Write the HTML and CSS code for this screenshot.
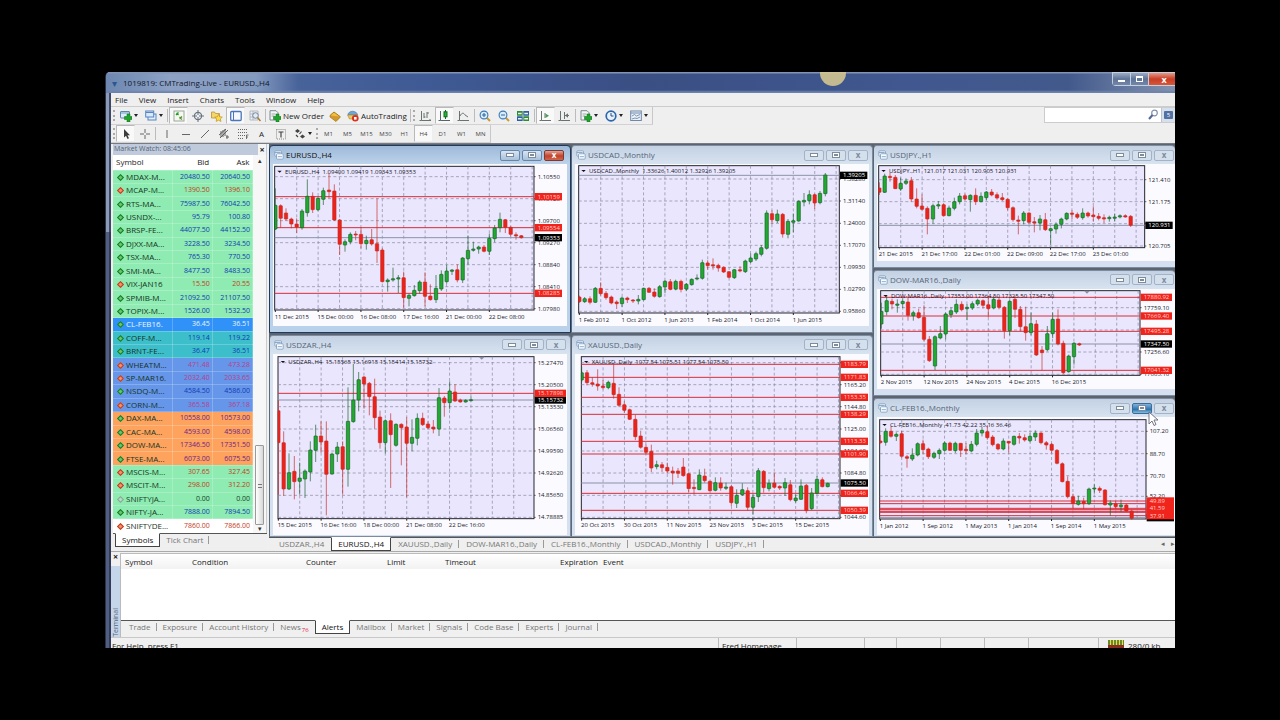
FILE: index.html
```html
<!DOCTYPE html>
<html lang="en">
<head>
<meta charset="utf-8">
<title>1019819: CMTrading-Live - EURUSD.,H4</title>
<link rel="stylesheet" href="styles.css">
</head>
<body>
<svg class="defs" aria-hidden="true">
  <symbol id="plus" viewBox="0 0 12 12"><path d="M7 4h3v2.500h2v3h-2V12H7V9.500H4.500v-3H7z" fill="#1fa52c" stroke="#0d6b1a" stroke-width=".5"/></symbol>
  <symbol id="i-new" viewBox="0 0 12 12"><rect x=".5" y="1.500" width="9" height="6.500" rx=".5" fill="#dcebf5" stroke="#5c87a8"/><path d="M1 3h8" stroke="#6ba0c8"/><use href="#plus"/></symbol>
  <symbol id="i-prof" viewBox="0 0 12 12"><rect x="3" y="4" width="8" height="6" fill="#e4eefa" stroke="#5684c0"/><rect x=".7" y="1" width="8" height="6" fill="#dae9fa" stroke="#5684c0"/><path d="M1 2.500h7.500" stroke="#5684c0"/></symbol>
  <symbol id="i-watch" viewBox="0 0 12 12"><rect x="1" y="1" width="10" height="10" fill="#f4f8ee" stroke="#9aa898"/><path d="M3.500 3l2 2M3 5l2.500-2.500" stroke="#1c9a2b" stroke-width="1.300"/><path d="M6.500 7l2.500 2.500M6.500 9l2.500-2.500" stroke="#5a8d35" stroke-width="1.300"/></symbol>
  <symbol id="i-target" viewBox="0 0 12 12"><circle cx="6" cy="6" r="3.600" fill="none" stroke="#687480" stroke-width="1.200"/><path d="M6 0v5M6 7v5M0 6h5M7 6h5" stroke="#687480"/></symbol>
  <symbol id="i-nav" viewBox="0 0 12 12"><path d="M.5 2h3l1 1.500h4V8h-8z" fill="#f3d66c" stroke="#bd902b" stroke-width=".8"/><path d="M7.500 4.500l1.200 2.300 2.600.3-1.900 1.700.5 2.600-2.400-1.200-2.300 1.200.4-2.600-1.800-1.700 2.500-.3z" fill="#ffdc45" stroke="#bd902b" stroke-width=".7"/></symbol>
  <symbol id="i-term" viewBox="0 0 12 12"><rect x=".7" y="1.500" width="10.500" height="9" rx="1" fill="#f5f9ff" stroke="#4975bb" stroke-width="1.300"/><path d="M3.500 1.500v9" stroke="#4975bb"/></symbol>
  <symbol id="i-test" viewBox="0 0 12 12"><path d="M1 1h8v9H1zM1 4h8M4 1v9M1 7h8" fill="#eef1f5" stroke="#a4aebb" stroke-width=".8"/><circle cx="6.500" cy="5.500" r="2.800" fill="#dfeaf5" stroke="#758698"/><path d="M8.500 7.500l3 3.500" stroke="#a67c2e" stroke-width="1.500"/></symbol>
  <symbol id="i-order" viewBox="0 0 12 12"><path d="M1 .7h6l2 2V10H1z" fill="#f4f5f5" stroke="#7d8a94"/><path d="M2.500 4h4M2.500 6h3" stroke="#9aa"/><use href="#plus"/></symbol>
  <symbol id="i-gold" viewBox="0 0 12 12"><path d="M1 5.500L5 2l6 4.500L7 10.500z" fill="#f0c040" stroke="#a8771a"/><path d="M1 5.500v1.500l6 4.500 4-4v-1" fill="#d29a2b" stroke="#a8771a" stroke-width=".7"/></symbol>
  <symbol id="i-auto" viewBox="0 0 12 12"><path d="M1 5c0-5 9-5 9.500 0z" fill="#6ca7d9" stroke="#3c74a8" stroke-width=".6"/><path d="M.5 5h10.500L9 9H2.500z" fill="#ecc457" stroke="#a9862e" stroke-width=".6"/><circle cx="8.300" cy="8.300" r="3.300" fill="#d8321d"/><rect x="7" y="7" width="2.600" height="2.600" fill="#fff"/></symbol>
  <symbol id="i-bars" viewBox="0 0 12 12"><path d="M2.500 1v9.500H12M.5 10.500h2M5 8V3M5 7h1.500M8 8V2M8 3h2M10.500 9l1.500 1.500" stroke="#68736f" fill="none"/></symbol>
  <symbol id="i-candle" viewBox="0 0 12 12"><path d="M2.500 1v9.500H12M.5 10.500h2" stroke="#566" fill="none"/><path d="M7.500 0v9" stroke="#0d6b1a"/><rect x="6" y="1.800" width="3" height="5" fill="#28b43a" stroke="#0d6b1a"/></symbol>
  <symbol id="i-line" viewBox="0 0 12 12"><path d="M2.500 1v9.500H12M.5 10.500h2M3 6c2-4 4-3 5-1l3 2" stroke="#68736f" fill="none"/></symbol>
  <symbol id="i-zin" viewBox="0 0 12 12"><path d="M7.500 7.500L11 11" stroke="#c99a34" stroke-width="2"/><circle cx="5" cy="5" r="3.900" fill="#d9ecfb" stroke="#3b78b5" stroke-width="1.100"/><path d="M3 5h4M5 3v4" stroke="#2b68a5" stroke-width="1.100"/></symbol>
  <symbol id="i-zout" viewBox="0 0 12 12"><path d="M7.500 7.500L11 11" stroke="#c99a34" stroke-width="2"/><circle cx="5" cy="5" r="3.900" fill="#d9ecfb" stroke="#3b78b5" stroke-width="1.100"/><path d="M3 5h4" stroke="#2b68a5" stroke-width="1.100"/></symbol>
  <symbol id="i-tile" viewBox="0 0 12 12"><path d="M0 1h5.700v4.700H0z" fill="#2e8b3a"/><path d="M6.300 1H12v4.700H6.300z" fill="#2b5fa9"/><path d="M0 6.300h5.700V11H0z" fill="#2b5fa9"/><path d="M6.300 6.300H12V11H6.300z" fill="#2e8b3a"/><path d="M1 3.500h3.700M7.300 3.500H11M1 8.800h3.700M7.300 8.800H11" stroke="#e9f5e0" stroke-width="1.500"/></symbol>
  <symbol id="i-scroll" viewBox="0 0 12 12"><path d="M2.500 1v9.500H12M.5 10.500h2M6 3v5" stroke="#68736f" fill="none"/><path d="M6.500 3.500L10 5.700 6.500 8z" fill="#4c9a5a"/></symbol>
  <symbol id="i-shift" viewBox="0 0 12 12"><path d="M2.500 1v9.500H12M.5 10.500h2M6.500 2v7M7 5.500h4" stroke="#68736f" fill="none"/><path d="M7 5.500l3-2.200v4.400z" fill="#68736f"/></symbol>
  <symbol id="i-clock" viewBox="0 0 12 12"><circle cx="6" cy="6" r="4.800" fill="#e7f2fd" stroke="#2c66ad" stroke-width="1.700"/><path d="M6 3v3h2.500" stroke="#2c4e7e" fill="none"/></symbol>
  <symbol id="i-templ" viewBox="0 0 12 12"><rect x=".7" y="1" width="10.600" height="9.500" fill="#eaf1fa" stroke="#6f88a8"/><path d="M1 3h10" stroke="#6f88a8"/><path d="M2 6l2.500-1.500 2 1.500L10 4.500M2 9l3-1 2 .5 3-1.500" stroke="#5c7c9c" fill="none" stroke-width=".8"/></symbol>
  <symbol id="i-cursor" viewBox="0 0 12 12"><path d="M4 1v8.500l2-1.800 1.500 3.300 1.500-.7L7.500 7.200H10z" fill="#3c3c3c"/></symbol>
  <symbol id="i-cross" viewBox="0 0 12 12"><path d="M6 1v4M6 7v4M1 6h4M7 6h4" stroke="#666"/></symbol>
  <symbol id="i-vline" viewBox="0 0 12 12"><path d="M6 2v8" stroke="#666"/></symbol>
  <symbol id="i-hline" viewBox="0 0 12 12"><path d="M2 6.500h8" stroke="#666"/></symbol>
  <symbol id="i-tline" viewBox="0 0 12 12"><path d="M2 10l8-8" stroke="#666"/></symbol>
  <symbol id="i-chan" viewBox="0 0 12 12"><path d="M1 7l7-6M2 10l8-8M3 3v6M5 2v7M7 1v7M9 7v4M8 9h3" stroke="#555" stroke-width=".9"/></symbol>
  <symbol id="i-fibo" viewBox="0 0 12 12"><path d="M1 1.500h10M1 4.500h10M1 7.500h7M1 10.500h6" stroke="#666" stroke-dasharray="1 1"/><path d="M9.500 11V7h2M9.500 9h1.500" stroke="#555" fill="none" stroke-width=".8"/></symbol>
  <symbol id="i-box" viewBox="0 0 12 12"><rect x="1.500" y="1.500" width="9" height="9.500" fill="none" stroke="#888" stroke-dasharray="1 1"/><path d="M3.500 4h5M6 4v5.500" stroke="#444" stroke-width="1.200"/></symbol>
  <symbol id="i-arrows" viewBox="0 0 12 12"><path d="M1 3l2.500-2L6 3 3.500 5zM6 8.500l2.500-2 2.500 2-2.500 2z" fill="#444"/><path d="M2 7l2 2M7.500 3.500l-2 2.500" stroke="#444" stroke-width="1.200"/></symbol>
  <symbol id="i-doc" viewBox="0 0 12 12"><rect x="1" y="1" width="8" height="6.500" rx="1" fill="#edf4fb" stroke="#7c9cbe"/><rect x="3" y="4.500" width="8" height="6.500" rx="1" fill="#f8fbff" stroke="#7c9cbe"/><path d="M1 3h7M4.500 8h5" stroke="#7c9cbe"/></symbol>
</svg>

<main class="app">
  <header class="titlebar">
    <span class="logo">▾</span>
    <h1>1019819: CMTrading-Live - EURUSD.,H4</h1>
    <i class="sun"></i>
    <div class="sys">
      <button aria-label="Minimize"><i class="min"></i></button><button aria-label="Maximize"><i class="max"></i></button><button class="close" aria-label="Close">x</button>
    </div>
  </header>

  <nav class="menu">
    <button>File</button><button>View</button><button>Insert</button><button>Charts</button><button>Tools</button><button>Window</button><button>Help</button>
  </nav>

  <div class="bars">
    <div class="toolrows">
      <div class="tools" id="tools1"></div>
      <div class="tools" id="tools2"></div>
    </div>
    <form class="search">
      <input type="search" aria-label="Search">
      <svg viewBox="0 0 12 12"><circle cx="7.500" cy="4" r="2.800" fill="none" stroke="#8292ac" stroke-width="1.200"/><path d="M5.500 6L2 10" stroke="#50689a" stroke-width="2"/></svg>
      <button type="button" aria-label="Messages"><span>5</span></button>
    </form>
  </div>

  <div class="work">
    <aside class="watch">
      <div class="cap"><h2>Market Watch: 08:45:06</h2><button aria-label="Close Market Watch">×</button></div>
      <div class="list">
        <table>
          <thead><tr><th>Symbol</th><th>Bid</th><th>Ask</th></tr></thead>
          <tbody id="quotes"></tbody>
        </table>
        <div class="scroll"><span>▴</span><i></i><span>▾</span></div>
      </div>
      <div class="tabs"><button class="on">Symbols</button><button>Tick Chart</button></div>
    </aside>

    <section class="desk">
      <div class="mdi">
        <div class="col two" id="col1"></div>
        <div class="col two" id="col2"></div>
        <div class="col three" id="col3"></div>
        <svg class="pointer" viewBox="0 0 12 16"><path d="M1 1v12l3-3 2 4.500 2-1L6 9h4z" fill="#fff" stroke="#667" stroke-width=".9"/></svg>
      </div>
      <div class="tabs charts">
        <button>USDZAR.,H4</button><button class="on">EURUSD.,H4</button><button>XAUUSD.,Daily</button><button>DOW-MAR16.,Daily</button><button>CL-FEB16.,Monthly</button><button>USDCAD.,Monthly</button><button>USDJPY.,H1</button>
        <span class="arrows"><span>◂</span><span>▸</span></span>
      </div>
    </section>
  </div>

  <section class="terminal">
    <div class="side"><button aria-label="Close Terminal">×</button><h2>Terminal</h2></div>
    <div class="pane">
      <table>
        <thead><tr><th>Symbol</th><th>Condition</th><th>Counter</th><th>Limit</th><th>Timeout</th><th>Expiration</th><th>Event</th></tr></thead>
      </table>
      <div class="tabs">
        <button>Trade</button><button>Exposure</button><button>Account History</button><button>News<sub>76</sub></button><button class="on">Alerts</button><button>Mailbox</button><button>Market</button><button>Signals</button><button>Code Base</button><button>Experts</button><button>Journal</button>
      </div>
    </div>
  </section>

  <footer class="status">
    <span class="help">For Help, press F1</span><span class="profile">Fred Homepage</span><span></span><span></span><span></span><span></span><span></span><span></span>
    <span class="net"><i></i>280/0 kb</span>
  </footer>
</main>
<script src="app.js"></script>
</body>
</html>
```
FILE: styles.css
```css
* { box-sizing: border-box; }
body {
  margin: 0;
  min-height: 100vh;
  padding: 72px 105px;
  display: flex;
  background: #000;
  color: #222;
  font: 8px/10px "Open Sans", "Noto Sans", sans-serif;
}
h1, h2 { margin: 0; font-size: 8px; font-weight: 400; }
button { font: inherit; color: inherit; background: none; border: 0; padding: 0; margin: 0; white-space: nowrap; }
.defs { position: absolute; width: 0; height: 0; }

.app {
  flex: 1;
  min-width: 0;
  height: calc(100vh - 144px);
  min-height: 576px;
  display: flex;
  flex-direction: column;
  overflow: hidden;
  padding-left: 5px;
  border-left: 1px solid #2b3346;
  border-radius: 5px 0 0 0;
  background: linear-gradient(90deg, #8c99b8 0 3px, #3e4966 3px 5px, #f0f0f0 5px) no-repeat 0 0 / 100% 160px, linear-gradient(90deg, #515d83 0 3px, #323b57 3px 5px, #f0f0f0 5px);
}

/* Title bar */
.titlebar {
  position: relative;
  flex: 0 0 21px;
  margin-left: -5px;
  display: flex;
  align-items: center;
  gap: 6px;
  padding-left: 6px;
  background: linear-gradient(180deg, #8494b4 0 1px, transparent 2px 18px, #6d83ad 20px), linear-gradient(90deg, #6d87b0, #8ca1c4 6%, #839abf 14%, #48639a 18%, #3f5a94 30%, #3a4f84 50%, #40588f 75%, #42598c 90%, #8292ae);
}
.titlebar h1 { color: #11182a; line-height: 20px; }
.logo { color: #2b5790; font-size: 10px; }
.sun { position: absolute; left: 68%; top: -12px; width: 26px; height: 26px; margin-left: -13px; border-radius: 50%; background: #dccb90; opacity: .85; }
.sys { margin-left: auto; align-self: flex-start; display: flex; height: 14px; border: 1px solid #c4cfe0; border-right: 0; border-radius: 0 0 0 4px; }
.sys button { width: 18px; display: grid; place-items: center; color: #fff; border-right: 1px solid #c4cfe0; background: linear-gradient(#9aabc6, #5f7496 50%, #7287aa); }
.sys .close { width: 26px; padding-left: 4px; border-right: 0; font: 700 9px/9px "Open Sans", sans-serif; background: linear-gradient(#e29a88, #c93e25 50%, #d8563a); }
.min { width: 7px; height: 2px; margin-top: 3px; background: #fff; }
.max { width: 7px; height: 6px; border: 1px solid #fff; border-top-width: 2px; }

.menu { flex: 0 0 14px; display: flex; gap: 11px; padding-left: 4px; background: #efefef; border-bottom: 1px solid #ccc; }
.menu button { line-height: 12px; }

/* Toolbars */
.bars { flex: 0 0 37px; display: flex; justify-content: space-between; background: #efefef; border-bottom: 1px solid #777c84; }
.toolrows { display: flex; flex-direction: column; align-items: flex-start; }
.tools { display: flex; height: 18px; padding-left: 1px; border-right: 1px solid #c8c8c8; border-bottom: 1px solid #d2d2d2; }
.tools button { width: 19px; display: flex; align-items: center; justify-content: center; gap: 2px; color: #222; }
.tools svg { width: 12px; height: 12px; flex: none; }
.tools .drop { width: 25px; }
.tools .drop::after { content: ""; border: 2px solid transparent; border-top: 3px solid #222; border-bottom: 0; }
.tools .wide { width: auto; padding: 0 2px; }
.tools .on { background: #f9f9f9; border: 1px solid #b9b9b9; border-right-color: #eee; border-bottom-color: #eee; }
.tools i { width: 1px; margin: 2px 1px; background: #bbb; }
.tools i.grip { width: 2px; margin: 3px 1px; border-left: 2px dotted #aaa; background: none; }
.tools .tf { font-size: 6px; color: #444; }
.search { display: flex; align-self: flex-start; height: 16px; width: 131px; background: #fff; border: 1px solid #ccc; border-right: 0; }
.search input { flex: 1; min-width: 0; border: 0; background: none; font: inherit; }
.search svg { width: 12px; margin-right: 2px; }
.search button { width: 14px; display: grid; place-items: center; border-left: 1px solid #b9c3d3; background: #d6dfec; }
.search span { width: 9px; height: 8px; border-radius: 1px; background: #5370a3; color: #fff; font-size: 6px; line-height: 8px; }

.work { flex: 1; min-height: 0; display: flex; background: #efefef; }

/* Market watch */
.watch { width: 158px; padding-left: 2px; display: flex; flex-direction: column; border-right: 2px solid #f0f0f0; padding-bottom: 4px; }
.cap { flex: 0 0 11px; display: flex; justify-content: space-between; padding: 0 1px; background: #bfcbdc; }
.cap h2 { color: #566274; font-size: 7px; line-height: 10px; }
.cap button { width: 8px; background: #f4f4f4; font-weight: 700; font-size: 9px; line-height: 9px; }
.list { flex: 1; min-height: 0; display: flex; background: #f7f7f7; border: 1px solid #ccc; border-width: 0 1px 0 0; }
.list table { width: 140px; height: 100%; border-collapse: collapse; table-layout: fixed; }
.list th { height: 15px; padding: 0 3px; font-weight: 400; text-align: right; background: #fff; }
.list th:first-child { width: 59px; text-align: left; }
.list td { padding: 0 2px 0 0; font-size: 7px; text-align: right; line-height: 10px; border: 1px solid rgba(255,255,255,.22); border-left: 0; white-space: nowrap; color: #123ab4; }
.list td:first-child { text-align: left; padding-left: 4px; font-size: 8px; color: #173324; }
.list td i { display: inline-block; width: 5px; height: 5px; margin: 0 3px 0 1px; transform: rotate(45deg); border: 1px solid #0f7e26; background: #6cc46c; }
.list .down td:not(:first-child) { color: #c33b22; }
.list .down i { border-color: #c4391d; background: #f0936c; }
.list .flat td { color: #17402a; }
.list .flat i { border-color: #85a892; background: #b5dcc4; }
.green { background: #8eebb1; }
.sel { background: #3092f8; }
.list .sel td:nth-child(n) { color: #eaf4ff; }
.teal { background: #3cbfcb; }
.blue { background: #6596ea; }
.list .blue.down td:not(:first-child) { color: #b8428a; }
.orange { background: #fda35d; }
.list .orange td + td { color: #6f1f88; }
.white { background: #fff; }
.scroll { flex: 1; display: flex; flex-direction: column; align-items: center; padding-top: 2px; color: #333; }
.scroll i { width: 9px; height: 80px; margin-top: auto; border: 1px solid #9a9a9a; border-radius: 1px; background: linear-gradient(#777, #777) center 38px / 4px 1px no-repeat, linear-gradient(#777, #777) center 41px / 4px 1px no-repeat, linear-gradient(90deg, #fff, #d8d8d8); }
.scroll span { font-size: 7px; line-height: 8px; }

/* Tab strips */
.tabs { flex: none; display: flex; align-items: flex-start; height: 15px; padding-left: 2px; border-top: 1px solid #555; color: #777; }
.tabs button { height: 12px; padding: 0 6px; line-height: 12px; position: relative; }
.tabs button:not(.on)::after { content: ""; position: absolute; right: 0; top: 2px; height: 8px; border-right: 1px solid #999; }
.tabs button:has(+ .on)::after { display: none; }
.tabs .on { margin-top: -1px; height: 14px; color: #111; background: #fff; border: 1px solid #444; border-top-color: #fff; }
.watch .tabs { height: 14px; }

/* Chart windows */
.desk { flex: 1; min-width: 0; display: flex; flex-direction: column; }
.mdi { position: relative; flex: 1; min-height: 0; display: grid; grid-template-columns: repeat(3, minmax(0, 1fr)); padding-top: 1px; background: #5c6470; }
.col { display: grid; min-height: 0; gap: 2px; }
.two { grid-template-rows: 187fr 201fr; }
.three { grid-template-rows: 122fr 126fr 138fr; }
.win { min-height: 0; display: flex; flex-direction: column; padding: 0 3px 6px; border: 1px solid #7d8ba0; border-left-color: #5b6878; border-radius: 4px 4px 0 0; background: linear-gradient(#c3d1e3, #d8e3f0 18px, #d5e1f0); }
.win:last-child { padding-bottom: 1px; }
.three .win { padding-right: 0; border-right: 0; }
.win.active { border-color: #1f3a5e; background: linear-gradient(#9db9d8, #bdd3ea 18px, #b9d1ea); }
.wbar { flex: 0 0 18px; display: flex; align-items: center; gap: 2px; padding: 0 1px; }
.active .wbar { padding-right: 3px; }
.wbar > svg { width: 10px; height: 10px; }
.wbar h2 { flex: 1; color: #55657a; }
.active .wbar h2 { color: #111; }
.wbar button { width: 20px; height: 11px; display: grid; place-items: center; border: 1px solid #a3b2c6; border-radius: 2px; background: #d5e0ed; color: #7d8b9e; font: 700 8px/8px "Open Sans", sans-serif; }
.wbar .b1 { width: 8px; height: 4px; border: 1px solid #7d8b9e; background: #fff; }
.wbar .b2 { width: 8px; height: 6px; border: 1px solid #7d8b9e; background: #7d8b9e; box-shadow: inset 0 0 0 1px #fff; }
.wbar .hot { background: linear-gradient(#7fb5dc, #2d73ab 60%, #7fc0e2); border-color: #3d6c98; }
.active .wbar button { background: linear-gradient(#d8e5f3, #a8c0da); border-color: #6585a9; }
.active .wbar .x { background: linear-gradient(#e0a595, #c1422a 55%, #d0674c); color: #fff; border-color: #7c3a35; }
.chart { flex: 1; min-height: 0; width: 100%; display: block; background: #fbfbff; font: 18px "Open Sans", sans-serif; }
.chart text { fill: #16161f; }
.chart .tag { fill: #ffd2cc; }
.chart .now { fill: #fff; }
.plot { fill: #e9e6fd; stroke: #26262e; stroke-width: 3; }
.grid { stroke: #85859a; stroke-width: 2; stroke-dasharray: 9 7; }
.level { stroke: #dc2d38; stroke-width: 3; }
.price { stroke: #8b93a8; stroke-width: 3; }
.up { fill: #20aa30; stroke: #175f26; stroke-width: 2; }
.dn { fill: #ec2318; stroke: #c92a25; stroke-width: 2; }
.pointer { position: absolute; left: 97%; top: 68%; width: 12px; height: 16px; }

.charts { height: 14px; padding-left: 3px; }
.charts button { padding: 0 7px; }
.charts .on { padding: 0 6px; }
.arrows { margin-left: auto; display: flex; gap: 6px; line-height: 12px; font-size: 7px; color: #666; }

/* Terminal */
.terminal { flex: 0 0 86px; display: flex; border-top: 1px solid #aaa; }
.side { width: 9px; display: flex; flex-direction: column; align-items: center; justify-content: space-between; background: linear-gradient(#f0f0f0 0 14px, #c6d6ea 14px); }
.side button { font-weight: 700; font-size: 9px; }
.side h2 { writing-mode: vertical-rl; transform: rotate(180deg); color: #54647c; font-size: 7px; }
.pane { flex: 1; min-width: 0; margin-top: 1px; display: flex; flex-direction: column; justify-content: space-between; background: #fff; border: 1px solid #bbb; border-right: 0; border-bottom: 0; }
.pane table { border-collapse: collapse; width: 100%; table-layout: fixed; }
.pane th { height: 15px; padding: 0 0 0 4px; font-weight: 400; text-align: left; background: linear-gradient(#fff, #f2f2f2); }
.pane th:nth-child(1) { width: 67px; }
.pane th:nth-child(2) { width: 114px; }
.pane th:nth-child(3) { width: 81px; }
.pane th:nth-child(4) { width: 58px; }
.pane th:nth-child(5) { width: 115px; }
.pane th:nth-child(6) { width: 43px; }
.pane .tabs { height: 17px; background: #f0f0f0; }
.tabs sub { font-size: 6px; line-height: 0; color: #e0213a; vertical-align: -2px; margin-left: 1px; }

.status { flex: 0 0 11px; display: flex; height: 11px; overflow: hidden; border-top: 1px solid #c8c8c8; line-height: 15px; }
.status span { width: 44px; border-left: 1px solid #bbb; padding-left: 3px; white-space: nowrap; }
.status .help { flex: 1; border-left: 0; padding-left: 1px; }
.status .profile { width: 78px; }
.status span:nth-child(3) { width: 68px; }
.status span:nth-child(4) { width: 32px; }
.status span:nth-child(8) { width: 70px; }
.status .net { width: 77px; display: flex; gap: 4px; padding-left: 9px; }
.net i { width: 16px; height: 8px; margin-top: 2px; background: repeating-linear-gradient(90deg, #6a8a22 0 2px, #e8dc60 2px 3px); border-bottom: 3px solid #8c2f22; }
```
FILE: app.js
```js
const icon = (id) => `<svg viewBox="0 0 12 12"><use href="#i-${id}"/></svg>`;
const SEP = "<i></i>", GRIP = '<i class="grip"></i>';
const btn = (id, label, cls = "") => `<button class="${cls}" aria-label="${label}">${icon(id)}</button>`;

document.getElementById("tools1").innerHTML = [
  GRIP, btn("new", "New chart", "drop"), btn("prof", "Profiles", "drop"), SEP,
  btn("watch", "Market Watch", "on"), btn("target", "Data Window"), btn("nav", "Navigator"),
  btn("term", "Terminal", "on"), btn("test", "Strategy Tester"), SEP,
  `<button class="wide">${icon("order")}New Order</button>`, btn("gold", "MetaEditor"),
  `<button class="wide">${icon("auto")}AutoTrading</button>`, SEP, GRIP,
  btn("bars", "Bar Chart"), btn("candle", "Candlesticks", "on"), btn("line", "Line Chart"), SEP,
  btn("zin", "Zoom In"), btn("zout", "Zoom Out"), btn("tile", "Tile Windows"), SEP,
  btn("scroll", "Auto Scroll", "on"), btn("shift", "Chart Shift"), SEP,
  btn("order", "Indicators", "drop"), btn("clock", "Periods", "drop"), btn("templ", "Templates", "drop"),
].join("");

document.getElementById("tools2").innerHTML = [
  GRIP, btn("cursor", "Cursor", "on"), btn("cross", "Crosshair"), SEP,
  btn("vline", "Vertical Line"), btn("hline", "Horizontal Line"), btn("tline", "Trendline"),
  btn("chan", "Channel"), btn("fibo", "Fibonacci"), "<button>A</button>", btn("box", "Text Label"),
  btn("arrows", "Arrows", "drop"), GRIP,
  ...["M1", "M5", "M15", "M30", "H1", "H4", "D1", "W1", "MN"].map((t) => `<button class="tf${t === "H4" ? " on" : ""}">${t}</button>`),
].join("");

const quotes = `MDAX-M...|20480.50|20640.50|green
MCAP-M...|1390.50|1396.10|green down
RTS-MA...|75987.50|76042.50|green
USNDX-...|95.79|100.80|green
BRSP-FE...|44077.50|44152.50|green
DJXX-MA...|3228.50|3234.50|green
TSX-MA...|765.30|770.50|green
SMI-MA...|8477.50|8483.50|green
VIX-JAN16|15.50|20.55|green down
SPMIB-M...|21092.50|21107.50|green
TOPIX-M...|1526.00|1532.50|green
CL-FEB16.|36.45|36.51|sel
COFF-M...|119.14|119.22|teal
BRNT-FE...|36.47|36.51|teal
WHEATM...|471.48|473.28|blue down
SP-MAR16.|2032.40|2033.65|blue down
NSDQ-M...|4584.50|4586.00|blue
CORN-M...|365.58|367.18|blue down
DAX-MA...|10558.00|10573.00|orange
CAC-MA...|4593.00|4598.00|orange
DOW-MA...|17346.50|17351.50|orange
FTSE-MA...|6073.00|6075.50|orange
MSCIS-M...|307.65|327.45|green down
MSCIT-M...|298.00|312.20|green down
SNIFTYJA...|0.00|0.00|green flat
NIFTY-JA...|7888.00|7894.50|green
SNIFTYDE...|7860.00|7866.00|white down`;
document.getElementById("quotes").innerHTML = quotes.split("\n").map((q) => {
  const [s, bid, ask, cls] = q.split("|");
  return `<tr class="${cls}"><td><i></i>${s}</td><td>${bid}</td><td>${ask}</td></tr>`;
}).join("");

// Each candle: colour, wick top, body top, body bottom, wick bottom.
const charts = [
  { col: 1, name: "EURUSD.,H4", active: true, info: "1.09400 1.09419 1.09343 1.09353", view: [15, 57, 882, 483], plot: [20, 64, 798, 495], x0: 22,
    rows: [[95, "1.10550"], [161, "1.10120"], [227, "1.09700"], [293, "1.09270"], [359, "1.08840"], [425, "1.08410"], [491, "1.07980"]],
    levels: [[155, "1.10159"], [248, "1.09554"], [445, "1.08285"]], now: [278, "1.09353"],
    dates: ["11 Dec 2015", "15 Dec 00:00", "16 Dec 08:00", "17 Dec 16:00", "21 Dec 00:00", "22 Dec 08:00"],
    data: "g130,181,252,255 r178,182,220,248 r190,204,222,228 r218,222,237,250 r220,237,246,264 g192,198,248,254 g103,154,203,215 r142,154,194,204 g155,160,194,198 g128,137,163,180 r85,135,140,160 r118,138,225,228 r222,225,298,330 g283,290,300,320 g262,268,290,298 r258,267,270,286 r246,268,296,310 g272,286,296,314 r252,284,297,302 r160,296,318,354 r310,315,410,412 g400,405,410,440 g368,401,405,410 g390,398,402,444 r380,398,458,488 g446,451,460,484 g420,436,452,455 g406,411,437,446 r382,411,454,484 r418,453,464,467 g390,430,464,474 g376,388,432,438 g360,378,410,416 g372,375,379,390 r358,374,405,412 g336,339,405,414 g272,316,341,358 g290,312,316,320 g302,306,312,326 r300,306,319,322 g266,280,319,330 g240,249,281,292 g203,223,248,262 r222,224,247,264 r244,247,268,274 r262,269,273,284 r270,272,278,281" },
  { col: 1, name: "USDZAR.,H4", info: "15.15565 15.16915 15.15414 15.15732", view: [15, 54, 882, 540], plot: [30, 62, 798, 548], x0: 31, mark: 641,
    rows: [[80, "15.27470"], [146, "15.20500"], [212, "15.13530"], [279, "15.06560"], [345, "14.99590"], [411, "14.92620"], [478, "14.85650"], [544, "14.78885"]],
    levels: [[172, "15.17898"]], now: [192, "15.15732"],
    dates: ["15 Dec 2015", "16 Dec 16:00", "18 Dec 00:00", "21 Dec 08:00", "22 Dec 16:00"],
    data: "r192,224,320,476 r286,320,459,480 g352,410,459,462 r360,406,437,490 g380,426,436,476 g400,405,429,486 g316,342,408,436 g266,300,343,378 r256,300,318,350 r256,315,415,538 g350,354,414,416 g318,333,354,378 r316,332,400,476 g154,256,400,452 g84,192,257,260 g108,131,192,226 r120,123,144,218 r138,142,182,238 r128,182,245,278 r224,243,320,338 g250,254,320,352 r232,254,296,456 g262,265,328,332 r262,265,275,388 r244,273,322,484 g250,304,322,346 g232,247,307,328 r230,247,266,270 r256,264,275,280 r252,273,279,292 g156,185,279,300 r180,186,200,242 g136,165,200,220 r144,168,195,198 r188,192,198,200 g190,193,198,200 g182,191,194,196" },
  { col: 2, name: "USDCAD.,Monthly", info: "1.33626 1.40012 1.32926 1.39205", view: [9, 57, 882, 483], plot: [20, 62, 802, 504], x0: 22,
    rows: [[102, "1.38280"], [168, "1.31140"], [235, "1.24000"], [301, "1.17070"], [367, "1.09930"], [433, "1.02790"], [499, "0.95860"]],
    levels: [], now: [91, "1.39205"],
    dates: ["1 Feb 2012", "1 Oct 2012", "1 Jun 2013", "1 Feb 2014", "1 Oct 2014", "1 Jun 2015"],
    data: "r452,456,470,474 g456,461,470,474 r454,461,472,478 g426,430,472,474 r412,430,446,452 r438,445,458,464 r452,456,474,478 r466,471,476,492 g455,459,476,486 r455,459,464,474 r462,465,468,474 g450,463,468,478 g428,430,464,466 r426,430,442,444 r430,441,454,458 g420,425,455,458 g405,409,426,444 r402,410,433,436 g404,409,432,436 r404,409,433,442 g414,418,432,438 g400,403,419,422 g388,399,402,406 g344,353,400,404 r346,354,362,374 r340,359,363,374 r356,361,369,380 r364,367,381,384 r378,380,397,400 g372,374,398,402 r364,374,378,382 g344,348,380,384 g326,339,350,354 g320,326,342,348 g300,308,328,334 g196,204,310,314 r196,206,224,238 g194,207,227,234 r204,208,267,278 g222,229,268,280 g206,227,232,262 g166,169,228,230 g144,166,171,184 g136,149,167,178 r146,149,174,192 g138,145,173,178 g84,90,146,154" },
  { col: 2, name: "XAUUSD.,Daily", info: "1077.54 1075.51 1077.54 1075.50", view: [9, 54, 882, 540], plot: [28, 62, 804, 548], x0: 29,
    rows: [[80, ""], [146, "1165.20"], [212, "1144.80"], [279, "1125.00"], [345, "1104.60"], [411, "1084.80"], [478, "1064.40"], [544, "1044.60"]],
    levels: [[85, "1183.79"], [124, "1171.83"], [184, "1153.35"], [235, "1138.29"], [316, "1113.33"], [354, "1101.90"], [472, "1066.46"], [523, "1050.39"]], now: [441, "1075.50"],
    dates: ["20 Oct 2015", "30 Oct 2015", "11 Nov 2015", "23 Nov 2015", "3 Dec 2015", "15 Dec 2015"],
    data: "g92,110,132,138 r102,110,140,148 r124,140,145,152 r100,144,150,164 r132,150,155,160 g134,139,155,160 r84,142,176,188 r154,175,208,212 r196,206,223,230 r218,221,250,252 r236,250,302,312 r284,300,334,338 r326,334,349,354 r326,346,396,408 g374,386,392,400 r378,386,395,408 r380,394,405,412 r392,405,411,446 r396,405,412,426 r366,393,419,422 r410,413,458,468 r430,454,458,476 g400,417,461,462 r398,420,434,440 r434,436,464,466 g424,440,463,466 r424,441,456,464 g440,453,457,462 r448,452,500,510 g460,478,502,516 g442,461,476,480 r454,464,514,524 g474,484,514,536 g396,404,482,498 r402,406,455,470 g430,442,458,466 r410,441,454,458 r448,451,456,462 g426,440,456,480 r432,446,491,496 g474,486,494,500 g430,450,490,492 r444,448,524,532 g456,471,518,522 g420,430,472,476 r424,431,452,454 g440,442,452,454" },
  { col: 3, name: "USDJPY.,H1", info: "121.017 121.031 120.905 120.931", view: [15, 57, 894, 288], plot: [20, 62, 818, 308], x0: 22,
    rows: [[104, "121.410"], [170, "121.175"], [236, ""], [303, "120.705"]],
    levels: [], now: [241, "120.931"],
    dates: ["21 Dec 2015", "21 Dec 17:00", "22 Dec 01:00", "22 Dec 09:00", "22 Dec 17:00", "23 Dec 01:00"],
    data: "r112,129,142,150 g86,93,142,144 r82,94,98,110 r90,97,131,132 g98,115,132,138 g100,108,115,120 r96,107,162,170 r130,162,184,190 r148,183,193,196 r184,190,222,268 g176,182,222,236 g168,179,183,192 r176,179,212,214 g182,189,212,214 g158,170,190,196 g144,153,170,178 r146,152,162,166 g148,151,164,200 r130,151,170,180 g142,154,170,172 g138,141,158,166 r132,141,150,154 r142,149,159,164 r144,158,164,168 r160,163,188,196 r184,188,224,230 r212,225,229,268 g198,204,227,238 r202,204,232,236 r216,230,234,262 g210,222,234,256 r204,224,254,258 g248,251,257,300 g232,239,252,266 g218,222,238,250 g202,205,222,226 r196,204,208,222 r202,208,217,222 g190,204,218,224 r200,204,213,218 r184,210,215,228 r204,214,220,226 r208,218,222,234 g212,217,221,230 g206,216,220,228 g208,212,216,220 r208,212,216,218 r210,214,241,246" },
  { col: 3, name: "DOW-MAR16.,Daily", info: "17353.00 17364.50 17325.50 17347.50", view: [15, 429, 894, 300], plot: [26, 434, 804, 688], x0: 28, mark: 645,
    rows: [[485, "17759.10"], [552, ""], [618, "17256.60"], [685, "17005.10"]],
    levels: [[454, "17880.92"], [510, "17669.40"], [556, "17495.28"], [673, "17041.32"]], now: [594, "17347.50"],
    dates: ["2 Nov 2015", "12 Nov 2015", "24 Nov 2015", "4 Dec 2015", "16 Dec 2015"],
    data: "g470,496,534,548 g450,464,497,508 r458,466,474,490 g460,474,478,500 g458,466,473,486 r456,468,508,524 g494,500,509,524 r488,500,515,518 r478,514,580,586 r570,580,644,648 g568,572,660,672 g540,563,576,580 g500,504,564,580 g484,494,506,516 g460,475,498,504 r466,475,491,496 g474,484,488,522 g466,473,486,492 g458,463,474,480 r460,464,478,488 r454,476,488,514 g450,460,486,490 r456,462,484,490 r480,484,554,578 g460,466,554,568 r450,460,490,516 r480,490,542,556 r482,542,560,584 g500,533,560,568 r522,534,627,630 r600,612,620,672 g540,563,611,616 g500,520,563,576 r490,519,594,598 r584,592,680,684 g626,630,677,680 g588,592,632,656 r590,593,597,600" },
  { col: 3, name: "CL-FEB16.,Monthly", hot: true, info: "41.73 42.22 35.16 36.46", view: [15, 78, 894, 351], plot: [23, 86, 822, 384], x0: 25,
    rows: [[121, "107.20"], [188, "88.70"], [254, "70.70"], [316, "52.20"]],
    levels: [[330, "49.89"], [338, ""], [352, "41.59"], [356, ""], [361, ""], [364, ""], [374, "37.91"]], now: [380, ""],
    dates: ["1 Jan 2012", "1 Sep 2012", "1 May 2013", "1 Jan 2014", "1 Sep 2014", "1 May 2015"],
    data: "r132,150,155,158 g112,121,154,164 r106,121,136,140 g124,130,136,150 r120,128,196,200 r192,197,202,230 g172,192,204,210 g154,158,192,196 r146,158,176,188 r170,174,197,204 g182,187,199,204 g172,178,188,204 g152,156,178,182 r152,156,178,180 g152,157,179,186 r156,157,178,198 r156,175,179,190 g150,160,180,184 g114,126,160,166 g108,118,126,136 r104,122,140,146 r132,138,161,166 r156,160,174,178 g142,150,174,178 r150,151,156,184 g134,136,160,164 r126,136,141,158 r130,140,147,152 g126,136,149,154 g118,126,138,150 r124,126,155,160 r150,155,162,176 r156,160,178,186 r174,178,217,220 r214,218,272,274 r256,271,317,322 r308,317,338,354 g314,330,340,344 r320,331,338,354 g290,294,338,342 g280,291,294,308 r286,292,298,306 r294,297,341,344 g328,336,342,374 r330,338,347,354 g326,342,347,362 r338,342,360,364 r356,360,382,386" },
];

const STEP = 16.05;

function drawChart(c) {
  const [l, t, r, b] = c.plot;
  const line = (cls, x1, y1, x2, y2) => `<path class="${cls}" d="M${x1} ${y1}L${x2} ${y2}"/>`;
  let s = `<rect class="plot" x="${l}" y="${t}" width="${r - l}" height="${b - t}"/>`;
  for (let x = c.x0 + 4 * STEP; x < r - 3; x += 4 * STEP) s += line("grid", x, t, x, b);
  for (const [y, label] of c.rows) {
    s += line("grid", l, y, r, y) + `<path d="M${r} ${y}h5" stroke="#222" stroke-width="2"/>`;
    if (label) s += `<text x="${r + 11}" y="${y + 6}">${label}</text>`;
  }
  for (const [y] of c.levels) s += line("level", l, y, r, y);
  s += line("price", l, c.now[0], r, c.now[0]);
  c.data.split(" ").forEach((d, i) => {
    const [hi, top, bot, lo] = d.slice(1).split(",").map(Number);
    const x = Math.round(c.x0 + i * STEP);
    const left = Math.max(x - 5, l);
    s += `<g class="${d[0] === "g" ? "up" : "dn"}"><path d="M${x} ${hi}V${lo}"/><rect x="${left}" y="${top}" width="${x + 5 - left}" height="${bot - top}" rx="1"/></g>`;
  });
  s += `<path d="M${l + 8} ${t + 13}h13l-6 6z" fill="#111"/><text x="${l + 31}" y="${t + 22}" xml:space="preserve">${c.name}  ${c.info}</text>`;
  if (c.mark) s += `<path d="M${c.mark - 9} ${t}h18l-9 9z" fill="#8a8fa0"/>`;

  // Price tags: all the boxes first, so that no box hides a neighbour's number.
  const tags = c.levels.map(([y, label]) => ({ y, label, fill: "#f0241c", cls: "tag" }));
  tags.unshift({ y: c.now[0], label: c.now[1], fill: "#000", cls: "now" });
  const wide = tags.some((g) => g.label.length > 7);
  for (const g of tags) s += `<rect x="${r + 2}" y="${g.y - 11}" width="${wide ? 94 : 82}" height="22" fill="${g.fill}"/>`;
  for (const g of tags) if (g.label) s += `<text class="${g.cls}" x="${r + 11}" y="${g.y + 6}">${g.label}</text>`;

  c.dates.forEach((d, i) => {
    const x = c.x0 + i * 8 * STEP;
    s += `<path d="M${x} ${b}v6" stroke="#222" stroke-width="3"/><text x="${x - 2}" y="${b + 26}">${d}</text>`;
  });
  return `<svg class="chart" role="img" aria-label="${c.name} chart" viewBox="${c.view.join(" ")}" preserveAspectRatio="xMinYMin meet">${s}</svg>`;
}

for (const c of charts) {
  document.getElementById("col" + c.col).insertAdjacentHTML("beforeend",
    `<article class="win${c.active ? " active" : ""}"><div class="wbar">${icon("doc")}<h2>${c.name}</h2>
     <button aria-label="Minimize"><i class="b1"></i></button><button class="${c.hot ? "hot" : ""}" aria-label="Maximize"><i class="b2"></i></button><button class="x" aria-label="Close">x</button></div>${drawChart(c)}</article>`);
}
```
